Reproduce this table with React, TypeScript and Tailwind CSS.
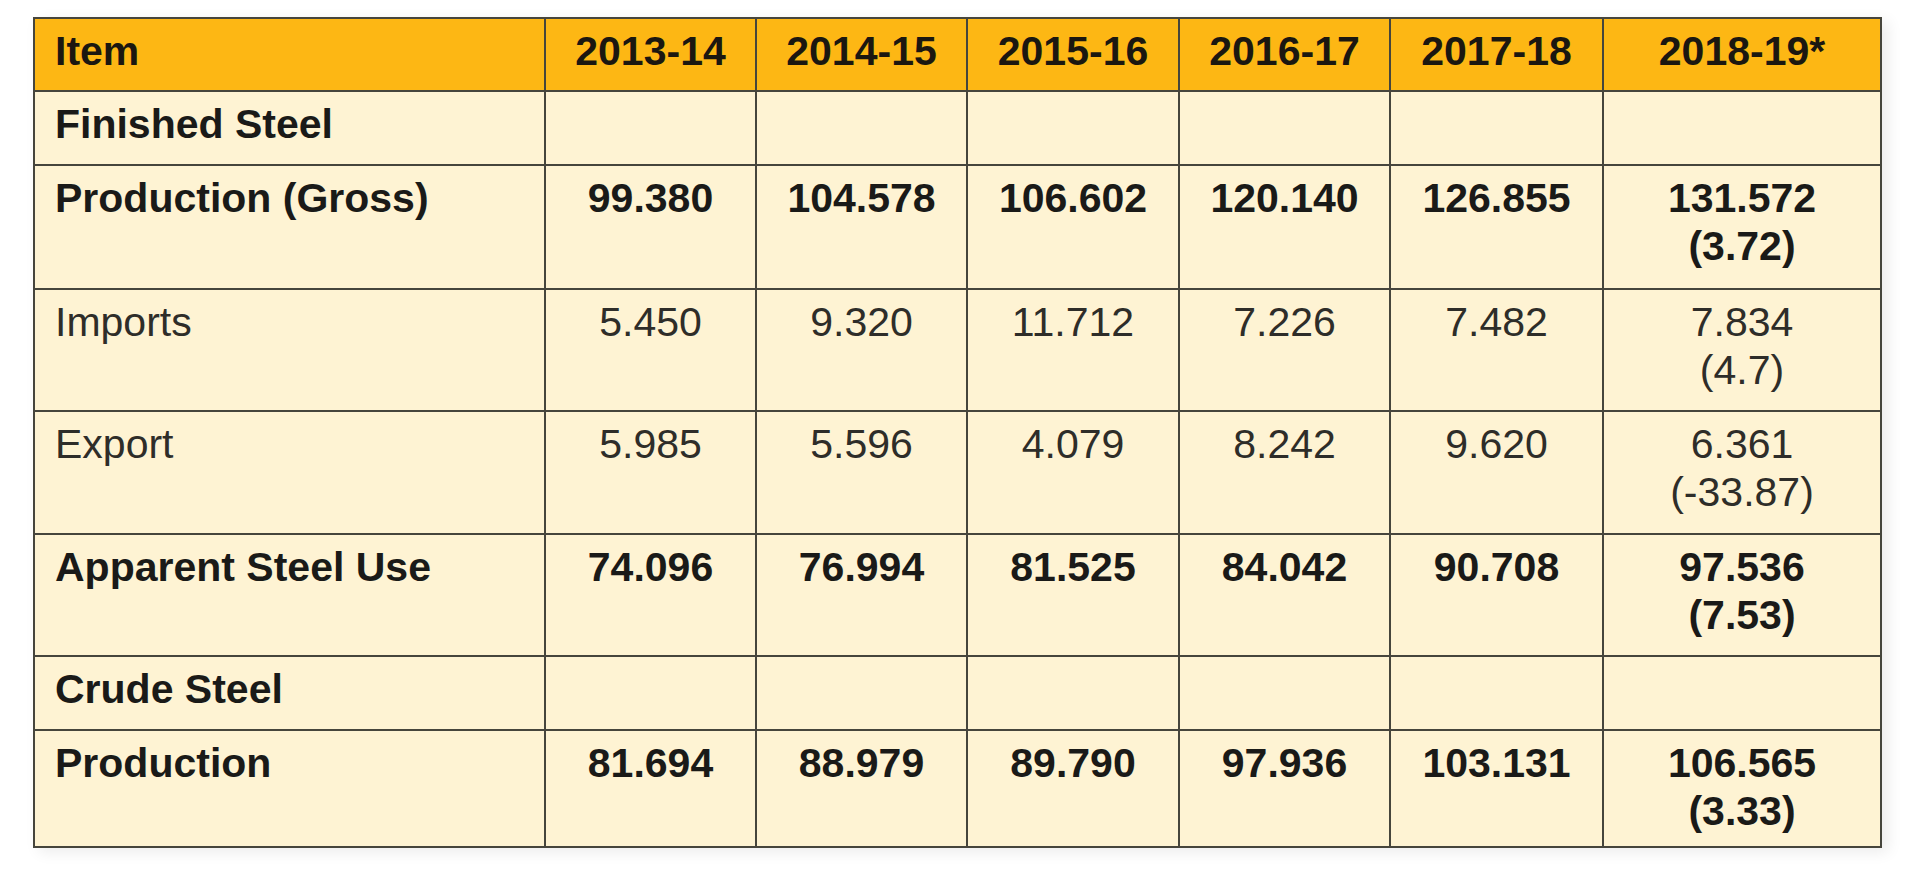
type Row = {
  label: string;
  bold: boolean;
  height: string;
  values: string[];
  last?: [string, string];
};

const years = ['2013-14', '2014-15', '2015-16', '2016-17', '2017-18', '2018-19*'];

const rows: Row[] = [
  { label: 'Finished Steel', bold: true, height: 'h-[74px]', values: ['', '', '', '', ''] },
  {
    label: 'Production (Gross)',
    bold: true,
    height: 'h-[124px]',
    values: ['99.380', '104.578', '106.602', '120.140', '126.855'],
    last: ['131.572', '(3.72)'],
  },
  {
    label: 'Imports',
    bold: false,
    height: 'h-[122px]',
    values: ['5.450', '9.320', '11.712', '7.226', '7.482'],
    last: ['7.834', '(4.7)'],
  },
  {
    label: 'Export',
    bold: false,
    height: 'h-[123px]',
    values: ['5.985', '5.596', '4.079', '8.242', '9.620'],
    last: ['6.361', '(-33.87)'],
  },
  {
    label: 'Apparent Steel Use',
    bold: true,
    height: 'h-[122px]',
    values: ['74.096', '76.994', '81.525', '84.042', '90.708'],
    last: ['97.536', '(7.53)'],
  },
  { label: 'Crude Steel', bold: true, height: 'h-[74px]', values: ['', '', '', '', ''] },
  {
    label: 'Production',
    bold: true,
    height: 'h-[117px]',
    values: ['81.694', '88.979', '89.790', '97.936', '103.131'],
    last: ['106.565', '(3.33)'],
  },
];

const cell = 'border-2 border-[#46453c] align-top pt-2 leading-[48px]';

export default function App() {
  return (
    <div className="min-h-screen bg-white pl-[33px] pt-[17px] font-['Liberation_Sans',Arial,sans-serif] text-[41px]">
      <table className="w-[1847px] table-fixed border-collapse bg-[#fef3d3] shadow-[6px_4px_14px_rgba(0,0,0,0.08)]">
        <colgroup>
          <col className="w-[511px]" />
          <col className="w-[211px]" />
          <col className="w-[211px]" />
          <col className="w-[212px]" />
          <col className="w-[211px]" />
          <col className="w-[213px]" />
          <col className="w-[278px]" />
        </colgroup>
        <thead>
          <tr className="h-[73px] bg-[#fdb714] text-[#1b1710]">
            <th className={`${cell} pl-5 text-left font-bold`}>Item</th>
            {years.map((y) => (
              <th key={y} className={`${cell} text-center font-bold`}>
                {y}
              </th>
            ))}
          </tr>
        </thead>
        <tbody>
          {rows.map((row) => {
            const tone = row.bold ? 'font-bold text-[#1a1a18]' : 'font-normal text-[#2e2d29]';
            return (
              <tr key={row.label} className={row.height}>
                <td className={`${cell} pl-5 text-left ${tone}`}>{row.label}</td>
                {row.values.map((v, i) => (
                  <td key={i} className={`${cell} text-center ${tone}`}>
                    {v}
                  </td>
                ))}
                <td className={`${cell} text-center ${tone}`}>
                  {row.last && (
                    <>
                      <div>{row.last[0]}</div>
                      <div>{row.last[1]}</div>
                    </>
                  )}
                </td>
              </tr>
            );
          })}
        </tbody>
      </table>
    </div>
  );
}
